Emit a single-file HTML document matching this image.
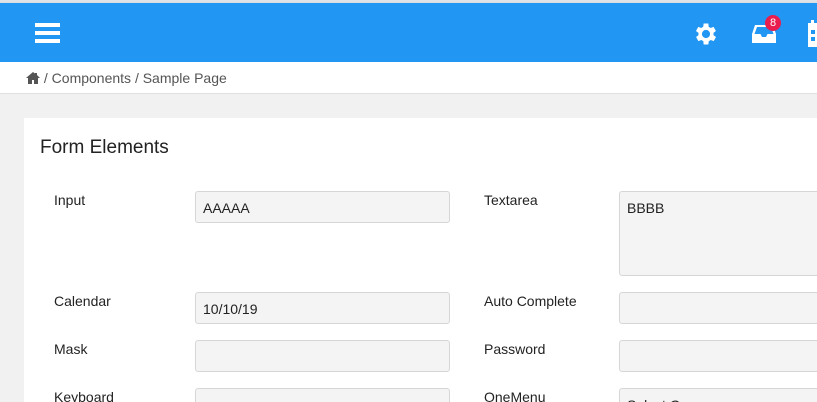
<!DOCTYPE html>
<html><head><style>
*{box-sizing:border-box;margin:0;padding:0}
html,body{width:817px;height:402px;overflow:hidden}
body{background:#f1f1f1;font-family:"Liberation Sans",sans-serif;color:#222;position:relative}
.top{position:absolute;left:0;top:0;width:817px;height:3px;background:#dfe3e7}
.bar{position:absolute;left:0;top:3px;width:817px;height:59px;background:#2196f3;box-shadow:0 2px 4px rgba(0,0,0,.2)}
.ham{position:absolute;left:35px;top:20px;width:25px;height:20px}
.ham div{height:4px;background:#fff;margin-bottom:4px}
.bc{position:absolute;left:0;top:62px;width:817px;height:32px;background:#fff;border-bottom:1px solid #e0e0e0;font-size:14px;color:#555;padding:8px 0 0 26px}
.card{position:absolute;left:24px;top:118px;width:800px;height:300px;background:#fff}
.t{position:absolute;left:40px;top:137px;font-size:19px;color:#222}
.l{position:absolute;font-size:14px;color:#222}
.i{position:absolute;height:32px;background:#f4f4f4;border:1px solid #d6d6d6;border-radius:3px;font-size:14px;padding:8px 7px;color:#222}
.badge{position:absolute;left:765px;top:12px;width:16px;height:16px;border-radius:8px;background:#e91e4e;color:#fff;font-size:11px;text-align:center;line-height:16px}
</style></head><body>
<div class="top"></div>
<div class="bar">
<div class="ham"><div></div><div></div><div></div></div>
<svg style="position:absolute;left:692px;top:17px" width="28" height="28" viewBox="0 0 24 24"><path fill="#fff" d="M19.4 13a7.5 7.5 0 000-2l2.1-1.6-2-3.5-2.5 1a7.4 7.4 0 00-1.7-1L15 3h-4l-.4 2.9a7.4 7.4 0 00-1.7 1l-2.5-1-2 3.5L6.6 11a7.5 7.5 0 000 2l-2.1 1.6 2 3.5 2.5-1a7.4 7.4 0 001.7 1L11 21h4l.4-2.9a7.4 7.4 0 001.7-1l2.5 1 2-3.5zM13 15.5a3.5 3.5 0 110-7 3.5 3.5 0 010 7z" transform="translate(-1 0)"/></svg>
<svg style="position:absolute;left:751px;top:20px" width="26" height="22" viewBox="0 0 26 22"><path fill="#fff" d="M4 2h18l3 9v9H1v-9zM3.5 11h6l1.5 3h4l1.5-3h6L20 4H6z"/></svg>
<div class="badge">8</div>
<svg style="position:absolute;left:807px;top:17px" width="12" height="28" viewBox="0 0 12 28"><rect x="1" y="3" width="14" height="24" fill="#fff"/><rect x="4" y="0" width="3" height="5" fill="#fff"/><rect x="4" y="10" width="4" height="4" fill="#2196f3"/><rect x="4" y="17" width="4" height="4" fill="#2196f3"/></svg>
</div>
<div class="bc"><svg width="14" height="12" viewBox="0 0 14 12" style="vertical-align:-1px"><path fill="#555" d="M7 0L0 6h2v6h4V8h2v4h4V6h2L11 3V1H9v0.5z"/></svg> / Components / Sample Page</div>
<div class="card"></div>
<div class="t">Form Elements</div>
<div class="l" style="left:54px;top:192px">Input</div>
<div class="i" style="left:195px;top:191px;width:255px">AAAAA</div>
<div class="l" style="left:484px;top:192px">Textarea</div>
<div class="i" style="left:619px;top:191px;width:220px;height:85px">BBBB</div>
<div class="l" style="left:54px;top:293px">Calendar</div>
<div class="i" style="left:195px;top:292px;width:255px">10/10/19</div>
<div class="l" style="left:484px;top:293px">Auto Complete</div>
<div class="i" style="left:619px;top:292px;width:220px"></div>
<div class="l" style="left:54px;top:341px">Mask</div>
<div class="i" style="left:195px;top:340px;width:255px"></div>
<div class="l" style="left:484px;top:341px">Password</div>
<div class="i" style="left:619px;top:340px;width:220px"></div>
<div class="l" style="left:54px;top:389px">Keyboard</div>
<div class="i" style="left:195px;top:388px;width:255px"></div>
<div class="l" style="left:484px;top:389px">OneMenu</div>
<div class="i" style="left:619px;top:388px;width:220px">Select One</div>
</body></html>
